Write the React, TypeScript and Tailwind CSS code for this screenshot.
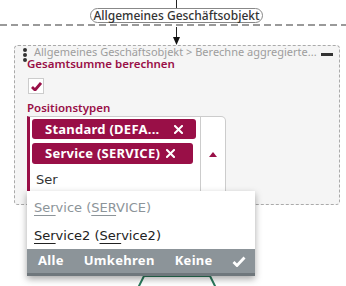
import React from 'react';

const crimson = '#990f47';

const Underlined = ({ children }: { children: React.ReactNode }) => (
    <span className="underline underline-offset-[3px] decoration-1">{children}</span>
);

const Cross = () => (
    <svg width="9" height="9" viewBox="0 0 9 9" className="shrink-0">
        <path d="M1 1 L8 8 M8 1 L1 8" stroke="#fff" strokeWidth="2" strokeLinecap="square" />
    </svg>
);

export default function App() {
    return (
        <div className="relative w-[346px] h-[286px] overflow-hidden bg-white" style={{ fontFamily: '"Noto Sans", sans-serif' }}>
            {/* incoming connector + node label */}
            <div className="ml-[176px] w-px h-2 bg-[#222]"></div>
            <div className="ml-[90px] w-[173px] h-[15px] rounded-full border border-[#888] flex items-center justify-center text-[12px] font-medium text-[#333] leading-none">
                Allgemeines Geschäftsobjekt
            </div>
            <svg width="346" height="4" className="block">
                <line x1="0" y1="2" x2="346" y2="2" stroke="#9a9a9a" strokeWidth="2" strokeDasharray="7 4" />
            </svg>
            <svg width="346" height="18" className="block">
                <line x1="176.5" y1="0" x2="176.5" y2="11" stroke="#222" strokeWidth="1" />
                <path d="M173 10 H180 L176.5 18 Z" fill="#111" />
            </svg>

            {/* node panel */}
            <div className="ml-[14px] w-[326px] h-[160px] rounded-[4px] border border-dashed border-[#aaa] bg-[#f5f5f5]">
                <div className="flex items-start h-[11px]">
                    <div className="w-[19px] shrink-0 flex flex-col items-center gap-[1px] pt-[2px]">
                        <span className="w-[4px] h-[4px] rounded-full bg-[#333]"></span>
                        <span className="w-[4px] h-[4px] rounded-full bg-[#333]"></span>
                        <span className="w-[4px] h-[4px] rounded-full bg-[#333]"></span>
                    </div>
                    <span className="text-[11px] text-[#9d9d9d] leading-[11px] whitespace-nowrap">Allgemeines Geschäftsobjekt &gt; Berechne aggregierte...</span>
                    <span className="ml-auto shrink-0 mr-[6px] mt-[7px] w-[12px] h-[3px] bg-[#333]"></span>
                </div>
                <div className="pl-[12px]">
                    <div className="text-[11.5px] font-semibold leading-[13px]" style={{ color: crimson }}>Gesamtsumme berechnen</div>
                    <div className="mt-[8px] ml-[1px] w-[16px] h-[16px] border border-[#ccc] bg-white flex items-center justify-center">
                        <svg width="11" height="9" viewBox="0 0 11 9">
                            <path d="M1 5 L4 8 L10 1" stroke={crimson} strokeWidth="2.8" fill="none" strokeLinejoin="round" />
                        </svg>
                    </div>
                    <div className="mt-[7px] text-[11.5px] font-semibold leading-[13px]" style={{ color: crimson }}>Positionstypen</div>
                    <div className="mt-[2px] w-[199px] h-[80px] flex bg-white rounded-tr-[5px] border border-[#ccc] border-l-[3px]" style={{ borderLeftColor: crimson }}>
                        <div className="flex-1 flex flex-col pt-[2px] pl-[2px] gap-[4px]">
                            <div className="w-[164px] h-[20px] rounded-[3px] flex items-center pl-[13px] pr-[13px] text-white font-bold text-[13px] tracking-[0.25px] leading-none" style={{ backgroundColor: crimson }}>
                                <span>Standard (DEFA...</span>
                                <span className="ml-auto"><Cross /></span>
                            </div>
                            <div className="w-[161px] h-[21px] rounded-[3px] flex items-center pl-[13px] text-white font-bold text-[13px] tracking-[0.25px] leading-none" style={{ backgroundColor: crimson }}>
                                <span>Service (SERVICE)</span>
                                <span className="ml-[6px]"><Cross /></span>
                            </div>
                            <div className="pl-[4px] pt-[2px] text-[13px] text-[#333]" style={{ fontFamily: '"DejaVu Sans", sans-serif' }}>Ser</div>
                        </div>
                        <div className="w-[25px] border-l border-[#ccc] flex items-center justify-center pb-[4px]">
                            <svg width="8" height="5" viewBox="0 0 8 5">
                                <path d="M0 5 L4 0 L8 5 Z" fill={crimson} />
                            </svg>
                        </div>
                    </div>
                </div>
            </div>

            {/* next node, mostly hidden behind the dropdown */}
            <svg className="absolute left-[134px] top-[274px]" width="86" height="14" viewBox="0 0 86 14">
                <path d="M4 14 L10 2 H76 L82 14" stroke="#2a7a5c" strokeWidth="2" fill="none" />
            </svg>

            {/* dropdown menu */}
            <div className="absolute left-[27px] top-[191px] w-[228px] bg-white shadow-[0_3px_7px_rgba(0,0,0,0.35)]" style={{ fontFamily: '"DejaVu Sans", sans-serif' }}>
                <div className="h-[30px] flex items-center pl-[7px] pt-[3px] text-[13px] text-[#8c9499]">
                    <span><Underlined>Ser</Underlined>vice (<Underlined>SER</Underlined>VICE)</span>
                </div>
                <div className="h-[28px] flex items-center pl-[7px] pt-[2px] text-[13px] text-[#222]">
                    <span><Underlined>Ser</Underlined>vice2 (<Underlined>Ser</Underlined>vice2)</span>
                </div>
                <div className="h-[27px] bg-[#8c9499] border-b-[3px] border-[#6f777c] flex items-center text-white font-bold text-[13px] tracking-[0.3px]" style={{ fontFamily: '"Noto Sans", sans-serif' }}>
                    <span className="ml-[11px]">Alle</span>
                    <span className="ml-[20px]">Umkehren</span>
                    <span className="ml-[20px]">Keine</span>
                    <svg className="ml-auto mr-[9px]" width="14" height="11" viewBox="0 0 14 11">
                        <path d="M1.5 6 L5 9.5 L12.5 1.5" stroke="#fff" strokeWidth="2.8" fill="none" />
                    </svg>
                </div>
            </div>
        </div>
    );
}
